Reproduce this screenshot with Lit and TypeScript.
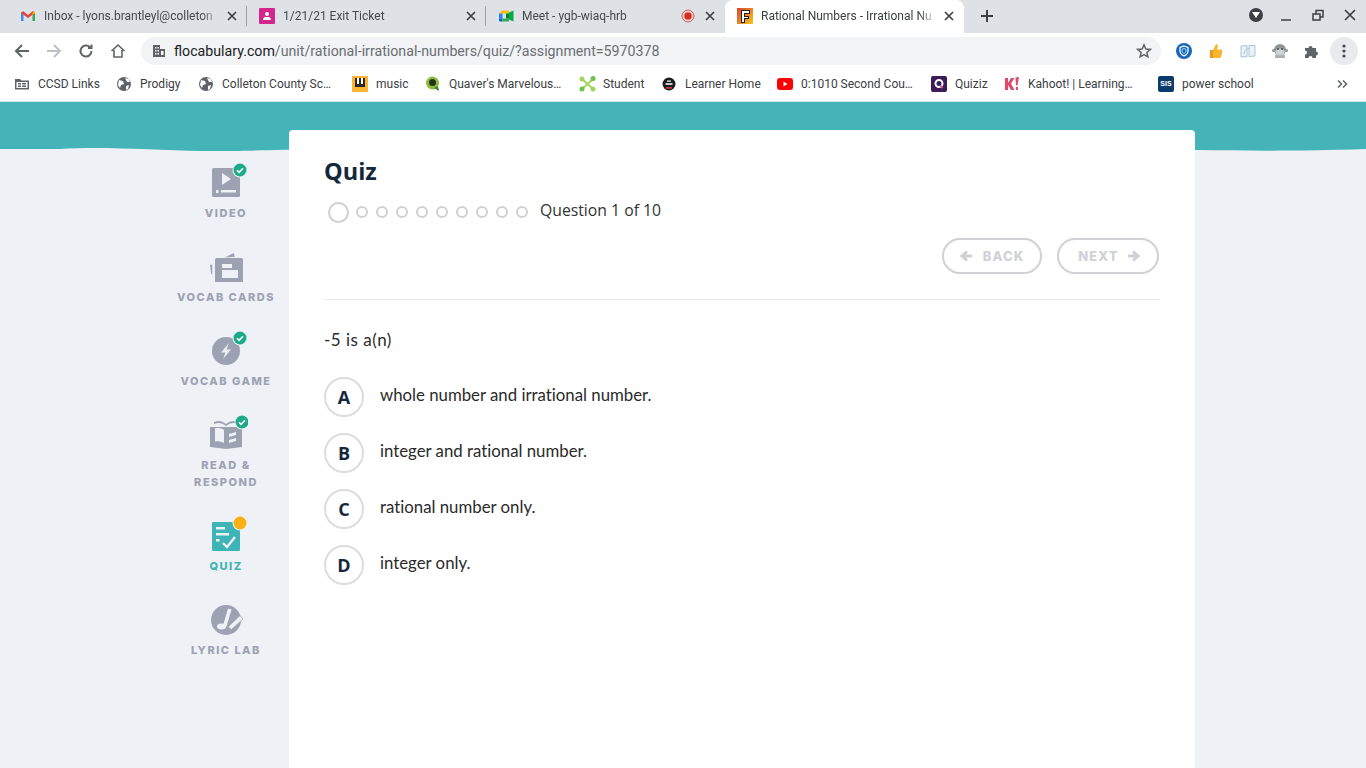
import { LitElement, css, html, svg, type TemplateResult } from "lit";
import { customElement } from "lit/decorators.js";

const GREY = "#9da2b3";
const BG = "#eef1f5";

const check = (cx: number, cy: number) => svg`
  <circle cx=${cx} cy=${cy} r="7.5" fill=${BG}></circle>
  <circle cx=${cx} cy=${cy} r="6.5" fill="#1dab87"></circle>
  <path d="M${cx - 3} ${cy + 0.2}l2.1 2.1 3.9-4" fill="none" stroke="#fff" stroke-width="1.6"></path>`;

// sidebar icons, all in a 44x36 box (x is offset by 204 from the page)
const sideIcons: Record<string, TemplateResult> = {
  video: html`<svg width="44" height="36" viewBox="0 0 44 36">
    <rect x="8" y="6" width="28" height="29" rx="1.5" fill=${GREY}></rect>
    <path d="M18 14l9 6-9 6z" fill=${BG} transform="translate(0 -3)"></path>
    <rect x="12" y="28" width="2.5" height="3" fill=${BG}></rect>
    <rect x="17" y="28" width="15" height="2.5" fill=${BG}></rect>
    ${check(36, 8)}
  </svg>`,
  cards: html`<svg width="44" height="36" viewBox="0 0 44 36">
    <path d="M6 19l1.200 9 1 .5V18.600zM21 11.500l8.500-4.500 1.500 3.800z" fill=${GREY}></path>
    <rect x="11" y="12" width="28" height="26" rx="1.500" fill=${GREY}></rect>
    <rect x="18" y="18" width="10" height="4" fill=${BG}></rect>
    <rect x="18" y="24" width="16" height="8" fill=${BG}></rect>
  </svg>`,
  game: html`<svg width="44" height="36" viewBox="0 0 44 36">
    <circle cx="22" cy="21" r="14" fill=${GREY}></circle>
    <path d="M25 13l-8 9.500h4.500l-2.500 6.500 8-9.500h-4.500z" fill=${BG}></path>
    ${check(36, 8)}
  </svg>`,
  read: html`<svg width="44" height="36" viewBox="0 0 44 36">
    <path d="M10 8c5-2 8-1 12 2 4-3 7-4 12-2v2c-5-2-8-1-12 2-4-3-7-4-12-2z" fill=${GREY}></path>
    <path d="M6 13h32v20l-16 2-16-2z" fill=${GREY}></path>
    <path d="M11 14.500c3-1 6-.5 9 1.500v13c-3-1.500-6-2-9-1.500z" fill=${BG}></path>
    <path d="M25 20l7-2v3l-7 2zM25 26l7-2v3l-7 2z" fill=${BG}></path>
    ${check(38, 8)}
  </svg>`,
  quiz: html`<svg width="44" height="36" viewBox="0 0 44 36">
    <rect x="8" y="7" width="28" height="29" rx="1" fill="#3fb4b6"></rect>
    <path d="M12 12h9v2.500h-9zM12 18h13v2.500h-13zM12 24h3.500v2.500h-3.500z" fill=${BG}></path>
    <path d="M19 28l4 4 8-10" fill="none" stroke=${BG} stroke-width="2.400"></path>
    <circle cx="36" cy="8" r="7.500" fill=${BG}></circle>
    <circle cx="36" cy="8" r="6.500" fill="#fbb016"></circle>
  </svg>`,
  lyric: html`<svg width="44" height="36" viewBox="0 0 44 36">
    <circle cx="22" cy="21" r="15" fill=${GREY}></circle>
    <path d="M24 9.500l3.500 1-5 17-3.500-1z" fill=${BG}></path>
    <ellipse cx="17.500" cy="27.500" rx="4.500" ry="3" fill=${BG}></ellipse>
    <path d="M24 28l12-11.500 3 3.500-11.500 10.500z" fill=${BG} stroke=${GREY} stroke-width=".8"></path>
  </svg>`,
};

const sideItems = [
  { icon: "video", label: "VIDEO" },
  { icon: "cards", label: "VOCAB CARDS" },
  { icon: "game", label: "VOCAB GAME" },
  { icon: "read", label: "READ &\nRESPOND" },
  { icon: "quiz", label: "QUIZ", active: true },
  { icon: "lyric", label: "LYRIC LAB" },
];

const favicons = {
  gmail: html`<svg width="16" height="16" viewBox="0 0 16 16">
    <path d="M1 13V4.500L3.500 4v9z" fill="#4285f4"></path>
    <path d="M15 13V4.500L12.500 4v9z" fill="#34a853"></path>
    <path d="M1 5l2-2 5 4 5-4 2 2-7 5z" fill="#ea4335"></path>
    <path d="M12.500 4.800L15 3.500V5l-2.500 2z" fill="#fbbc04"></path>
  </svg>`,
  ticket: html`<svg width="16" height="16" viewBox="0 0 16 16">
    <rect width="16" height="16" rx="1" fill="#d3258c"></rect>
    <circle cx="8" cy="6" r="2" fill="#fff"></circle>
    <path d="M4 12c0-2.500 1.500-3 4-3s4 .5 4 3z" fill="#fff"></path>
  </svg>`,
  meet: html`<svg width="16" height="16" viewBox="0 0 16 16">
    <path d="M4 2.500h7v3H1z" fill="#fbbc04"></path>
    <path d="M1 5.500h3.500v5H1z" fill="#2684fc"></path>
    <path d="M1 10.500h3.500v3H2.500a1.500 1.500 0 0 1-1.500-1.500z" fill="#0066da"></path>
    <path d="M4.500 10.500H11v3H4.500z" fill="#34a853"></path>
    <path d="M11 4.500v7l4.500 2v-11z" fill="#00ac47"></path>
    <path d="M8 5.500h3v5H8z" fill="#00832d"></path>
  </svg>`,
  floc: html`<svg width="16" height="16" viewBox="0 0 16 16">
    <defs><linearGradient id="fl" x1="0" y1="0" x2="1" y2="1">
      <stop offset="0" stop-color="#d8432b"></stop><stop offset="1" stop-color="#f9c623"></stop>
    </linearGradient></defs>
    <rect width="16" height="16" fill="url(#fl)"></rect>
    <path d="M4 2h9v4H8v2h4v3H8v4H4z" fill="#222"></path>
    <path d="M5 3h7v2H7v4h4v1H7v4H5z" fill="#fff"></path>
  </svg>`,
};

const globe = html`<svg width="16" height="16" viewBox="0 0 16 16">
  <circle cx="8" cy="8" r="7" fill="#5f6368"></circle>
  <path d="M3 4l4 1 1 3-3 1-1 3-2-3zM9 2l4 1 1 3-3 0zM10 10l3-1-1 4-2 1z" fill="#fff"></path>
</svg>`;

const bookmarks: { label: string; width: number; icon: TemplateResult }[] = [
  { label: "CCSD Links", width: 102, icon: html`<svg width="14" height="14" viewBox="0 0 14 14">
    <path d="M0 2h5l1.500 1.500H14V12.500H0z" fill="#5f6368"></path>
    <path d="M1.500 5h11v6h-11z" fill="#fff"></path>
    <path d="M3 6h3v1.500H3zM7 6h4v1.500H7zM3 8.500h3V10H3zM7 8.500h4V10H7z" fill="#5f6368"></path>
  </svg>` },
  { label: "Prodigy", width: 82, icon: globe },
  { label: "Colleton County Sc…", width: 154, icon: globe },
  { label: "music", width: 73, icon: html`<svg width="16" height="16" viewBox="0 0 16 16">
    <rect width="16" height="16" fill="#fbb534"></rect>
    <rect x="3" y="2" width="10" height="9" fill="#2c2522"></rect>
    <rect x="5" y="2" width="2" height="6" fill="#fff"></rect>
    <rect x="9" y="2" width="2" height="6" fill="#fff"></rect>
  </svg>` },
  { label: "Quaver's Marvelous…", width: 154, icon: html`<svg width="16" height="16" viewBox="0 0 16 16">
    <circle cx="7.500" cy="7" r="6.500" fill="#8dbb3a"></circle>
    <circle cx="7.500" cy="6.500" r="3.500" fill="#24321c"></circle>
    <path d="M9 12l5 3-1-5z" fill="#3a7d44"></path>
  </svg>` },
  { label: "Student", width: 82, icon: html`<svg width="17" height="16" viewBox="0 0 17 16">
    <path d="M3 3l11 10M14 3L3 13" stroke="#a4d65e" stroke-width="2"></path>
    <circle cx="3" cy="3" r="2.500" fill="#a4d65e"></circle>
    <circle cx="14" cy="2.500" r="2.500" fill="#6cc24a"></circle>
    <circle cx="3" cy="13" r="2.500" fill="#6cc24a"></circle>
    <circle cx="14" cy="13" r="2.500" fill="#a4d65e"></circle>
  </svg>` },
  { label: "Learner Home", width: 116, icon: html`<svg width="14" height="14" viewBox="0 0 14 14">
    <circle cx="7" cy="7" r="6.500" fill="#1c1c1c"></circle>
    <path d="M3.500 7h7" stroke="#fff" stroke-width="1.500"></path>
    <path d="M4 10h6v1.800H4z" fill="#c9354a"></path>
    <path d="M5 3.500h4v1.200H5z" fill="#fff"></path>
  </svg>` },
  { label: "0:1010 Second Cou…", width: 154, icon: html`<svg width="16" height="12" viewBox="0 0 16 12">
    <rect width="16" height="12" rx="3" fill="#f00"></rect>
    <path d="M6.500 3.500l4 2.500-4 2.500z" fill="#fff"></path>
  </svg>` },
  { label: "Quiziz", width: 73, icon: html`<svg width="16" height="16" viewBox="0 0 16 16">
    <rect width="16" height="16" rx="2" fill="#3a1d57"></rect>
    <circle cx="8" cy="7.500" r="3.500" fill="none" stroke="#fff" stroke-width="2"></circle>
    <path d="M9.500 10l2 2" stroke="#e64b8d" stroke-width="2"></path>
  </svg>` },
  { label: "Kahoot! | Learning…", width: 154, icon: html`<svg width="16" height="16" viewBox="0 0 16 16">
    <path d="M1 2h3v5l3-5h3.500L7 7.500l3.500 6.500H7L4 9v5H1z" fill="#e2486a"></path>
    <path d="M11.500 1.500l3.500-.5-1.500 8.500h-1.500zM12 11h2v3h-2z" fill="#e2486a"></path>
  </svg>` },
  { label: "power school", width: 100, icon: html`<span class="sis">SIS</span>` },
];

const stroke = (d: string, color = "#45484d", w = 2) =>
  html`<svg width="16" height="16" viewBox="0 0 16 16"><path d=${d} fill="none" stroke=${color} stroke-width=${w}></path></svg>`;

@customElement("app-root")
export class AppRoot extends LitElement {
  static override styles = css`
    :host {
      display: block;
      width: 1366px;
      height: 768px;
      overflow: hidden;
      background: #eef1f5;
      font-family: "Lato", "Liberation Sans", sans-serif;
    }
    svg { display: block; flex: none; }

    /* browser chrome */
    .tabstrip {
      height: 33px;
      background: #dee1e6;
      display: flex;
      padding-left: 8px;
      font: 12px Roboto, sans-serif;
      color: #45484d;
    }
    .tab {
      width: 239px;
      height: 33px;
      box-sizing: border-box;
      display: flex;
      align-items: center;
      padding: 0 7px 2px 12px;
      position: relative;
    }
    .tab + .tab::before {
      content: "";
      position: absolute;
      left: -1px;
      top: 6px;
      height: 20px;
      width: 1px;
      background: #9aa0a6;
    }
    .tab.active::before { display: none; }
    .tab.active {
      background: #fff;
      border-radius: 8px 8px 0 0;
      color: #3c4043;
    }
    .title {
      flex: 1;
      margin-left: 8px;
      white-space: nowrap;
      overflow: hidden;
      font-size: 12px;
      -webkit-mask-image: linear-gradient(90deg, #000 calc(100% - 18px), transparent);
      mask-image: linear-gradient(90deg, #000 calc(100% - 18px), transparent);
    }
    .rec { margin-right: 3px; }
    .x { margin-left: 4px; }
    .plus { margin: 8px 0 0 15px; }
    .winctl {
      margin-left: auto;
      display: flex;
      align-items: center;
      gap: 16px;
      padding: 0 8px 4px 0;
    }
    .dropdown {
      width: 14px;
      height: 14px;
      border-radius: 50%;
      background: #3c4043;
      display: flex;
      align-items: center;
      justify-content: center;
      margin-right: -1px;
    }
    .toolbar {
      height: 34px;
      box-sizing: border-box;
      padding: 2px 7px 0 14px;
      background: #fff;
      display: flex;
      align-items: center;
    }
    .nav { display: flex; gap: 16px; margin-right: 15px; }
    .omni {
      width: 1020px;
      height: 28px;
      border-radius: 14px;
      background: #f1f3f4;
      display: flex;
      align-items: center;
      padding: 0 9px 0 11px;
      box-sizing: border-box;
      font: 14.2px Roboto, sans-serif;
      color: #6a6e73;
    }
    .omni b { font-weight: 400; color: #202124; }
    .omni .url { margin-left: 8px; flex: 1; }
    .exts {
      display: flex;
      align-items: center;
      gap: 16px;
      margin-left: 15px;
    }
    .menu {
      width: 28px;
      height: 28px;
      border-radius: 50%;
      background: #e8eaed;
      display: flex;
      align-items: center;
      justify-content: center;
      margin-left: -6px;
    }
    .bookmarks {
      height: 35px;
      background: #fff;
      display: flex;
      align-items: center;
      padding: 0 0 1px 14px;
      font: 12px Roboto, sans-serif;
      color: #3c4043;
      box-sizing: border-box;
      border-bottom: 1px solid #d5e6e8;
    }
    .bm {
      display: flex;
      align-items: center;
      gap: 8px;
      white-space: nowrap;
      flex: none;
    }
    .bm .ic { width: 16px; display: flex; justify-content: center; flex: none; }
    .sis {
      width: 16px;
      height: 16px;
      border-radius: 2px;
      background: #0d3b6e;
      color: #fff;
      font: 700 7px "Liberation Sans", sans-serif;
      display: flex;
      align-items: center;
      justify-content: center;
    }
    .more { margin-left: auto; padding-right: 15px; }

    /* flocabulary page */
    .band { display: block; }
    .main {
      display: flex;
      margin-top: -21px;
      padding-left: 163px;
    }
    .side {
      width: 126px;
      flex: none;
      box-sizing: border-box;
      padding-top: 32px;
      display: flex;
      flex-direction: column;
      align-items: center;
      gap: 24px;
    }
    .item {
      display: flex;
      flex-direction: column;
      align-items: center;
      gap: 7px;
      font: 800 11px/17px Inter, sans-serif;
      letter-spacing: 1.5px;
      color: #9da2b3;
      text-align: center;
      white-space: pre-line;
    }
    .item.active { color: #3fb4b6; }
    .card {
      width: 906px;
      height: 638px;
      box-sizing: border-box;
      background: #fff;
      border-radius: 4px 4px 0 0;
      padding: 23px 35px 0;
    }
    h1 {
      margin: 0;
      font: 700 23.5px/36px "Open Sans", sans-serif;
      color: #14283c;
    }
    .progress {
      display: flex;
      align-items: center;
      margin-top: 7px;
      height: 28px;
      padding-left: 4px;
    }
    .dot {
      width: 12px;
      height: 12px;
      box-sizing: border-box;
      border: 2px solid #d0d0d0;
      border-radius: 50%;
      margin: 4px 0 0 8px;
    }
    .dot.first { width: 21px; height: 21px; margin: 4px -1px 0 0; }
    .count {
      margin-left: 12px;
      font: 400 15.75px "Open Sans", sans-serif;
      color: #333;
    }
    .buttons {
      display: flex;
      justify-content: flex-end;
      gap: 15px;
      margin-top: 14px;
      padding-bottom: 25px;
      border-bottom: 1px solid #eaeaea;
    }
    .btn {
      height: 36px;
      box-sizing: border-box;
      border: 2px solid #d0d1d7;
      border-radius: 18px;
      display: flex;
      align-items: center;
      justify-content: center;
      gap: 10px;
      padding-bottom: 1px;
      font: 800 13px Inter, sans-serif;
      letter-spacing: 1.1px;
      color: #d0d1d7;
    }
    .btn.back { width: 100px; }
    .btn.next { width: 102px; margin-right: 1px; gap: 8px; padding-left: 2px; }
    .question {
      margin-top: 27px;
      font-size: 17px;
      letter-spacing: .5px;
      font-variant-ligatures: none;
      line-height: 26px;
      color: #2a2a2a;
    }
    .options {
      margin-top: 24px;
      display: flex;
      flex-direction: column;
      gap: 16px;
    }
    .option {
      display: flex;
      align-items: center;
      gap: 16px;
      font-size: 16.8px;
      font-variant-ligatures: none;
      color: #2a2a2a;
    }
    .letter {
      width: 40px;
      height: 40px;
      box-sizing: border-box;
      border: 2px solid #dcdcdc;
      border-radius: 50%;
      display: flex;
      align-items: center;
      justify-content: center;
      font: 700 18px "Open Sans", sans-serif;
      color: #14283c;
      flex: none;
    }
    .option span { position: relative; top: -3px; }
  `;

  private tab(icon: TemplateResult, title: string, cls = "", extra?: TemplateResult) {
    return html`<div class="tab ${cls}">
      ${icon}
      <div class="title">${title}</div>
      ${extra}
      <div class="x">${stroke("M4 4l8 8M12 4l-8 8", "#3c4043", 1.7)}</div>
    </div>`;
  }

  override render() {
    const rec = html`<svg class="rec" width="14" height="14" viewBox="0 0 14 14">
      <circle cx="7" cy="7" r="6" fill="#f8d7d5" stroke="#e2574c" stroke-width="1"></circle>
      <circle cx="7" cy="7" r="3.800" fill="#d93025"></circle>
    </svg>`;
    return html`
      <div class="tabstrip">
        ${this.tab(favicons.gmail, "Inbox - lyons.brantleyl@colleton")}
        ${this.tab(favicons.ticket, "1/21/21 Exit Ticket")}
        ${this.tab(favicons.meet, "Meet - ygb-wiaq-hrb", "", rec)}
        ${this.tab(favicons.floc, "Rational Numbers - Irrational Nu", "active")}
        <div class="plus">${stroke("M8 2v12M2 8h12", "#3c4043", 2)}</div>
        <div class="winctl">
          <div class="dropdown">
            <svg width="8" height="6" viewBox="0 0 8 6"><path d="M0 0h8L4 6z" fill="#fff"></path></svg>
          </div>
          ${stroke("M3 13h10", "#3c4043", 1.500)}
          ${stroke("M3 7h7v6H3zM6 7V3.500h7V10h-3", "#3c4043", 1.500)}
          ${stroke("M3 3l10 10M13 3L3 13", "#3c4043", 1.700)}
        </div>
      </div>

      <div class="toolbar">
        <div class="nav">
          ${stroke("M15 8H2M8 2L2 8l6 6", "#5f6368")}
          ${stroke("M1 8h13M8 2l6 6-6 6", "#bdc1c6")}
          ${stroke("M13.500 8a5.500 5.500 0 1 1-1.600-3.900M13.500 1.500V5H10", "#5f6368")}
          ${stroke("M1.500 8L8 2l6.500 6M4 7v7h8V7", "#5f6368", 1.600)}
        </div>
        <div class="omni">
          <svg width="14" height="14" viewBox="0 0 14 14">
            <path d="M1 1h7v4h5v8H1z" fill="#5f6368"></path>
            <path d="M3 3h1.500v1.500H3zM5.500 3H7v1.500H5.500zM3 6h1.500v1.500H3zM5.500 6H7v1.500H5.500zM3 9h1.500v1.500H3zM5.500 9H7v1.500H5.500zM9 7h2.500v4H9z" fill="#fff"></path>
          </svg>
          <div class="url"><b>flocabulary.com</b>/unit/rational-irrational-numbers/quiz/?assignment=5970378</div>
          <svg width="16" height="16" viewBox="0 0 16 16">
            <path d="M8 1.800l1.800 4.200 4.500.4-3.400 3 1 4.400L8 11.500l-3.900 2.300 1-4.400-3.400-3 4.500-.4z" fill="none" stroke="#5f6368" stroke-width="1.500"></path>
          </svg>
        </div>
        <div class="exts">
          <svg width="16" height="16" viewBox="0 0 16 16">
            <circle cx="8" cy="8" r="8" fill="#1668b8"></circle>
            <path d="M8 3l4 1.500V8c0 2.500-2 4-4 5-2-1-4-2.500-4-5V4.500z" fill="none" stroke="#fff" stroke-width="1.200"></path>
            <path d="M8 5.500l2 .8V8c0 1.200-1 2-2 2.500-1-.5-2-1.300-2-2.500V6.300z" fill="none" stroke="#9dd0f5"></path>
          </svg>
          <svg width="16" height="16" viewBox="0 0 16 16">
            <path d="M2 7h3v8H2z" fill="#e99a1c"></path>
            <path d="M5 7l3-6c1.500 0 2 1 1.700 2.500L9 6.500h5v4l-1.500 4.500H5z" fill="#f7b733"></path>
          </svg>
          <svg width="16" height="16" viewBox="0 0 16 16">
            <path d="M1 3l6 -.5v11l-6 .5zM9 2.500h6V13l-6 .5z" fill="#eaf2f8" stroke="#a9c4d8"></path>
            <path d="M4 11c0-3 2-5 6-6" fill="none" stroke="#a9c4d8"></path>
          </svg>
          <svg width="16" height="16" viewBox="0 0 16 16">
            <circle cx="8" cy="7" r="6" fill="#8f9498"></circle>
            <circle cx="1.500" cy="7.500" r="1.500" fill="#8f9498"></circle>
            <circle cx="14.500" cy="7.500" r="1.500" fill="#8f9498"></circle>
            <ellipse cx="8" cy="9" rx="4.500" ry="3.500" fill="#d0d3d6"></ellipse>
            <circle cx="6" cy="6" r="1" fill="#444"></circle>
            <circle cx="10" cy="6" r="1" fill="#444"></circle>
            <path d="M3 12h10v3H3z" fill="#b0b3b6"></path>
          </svg>
          <svg width="16" height="16" viewBox="0 0 16 16">
            <path d="M1 5h3.500a2 2 0 0 1 4 0H12v3.500a2 2 0 0 1 0 4V15H8.500a2 2 0 0 0-4 0H1v-3.500a2 2 0 0 0 0-4z" fill="#5f6368"></path>
          </svg>
          <div class="menu">
            <svg width="4" height="14" viewBox="0 0 4 14">
              <circle cx="2" cy="2" r="1.600" fill="#45484d"></circle>
              <circle cx="2" cy="7" r="1.600" fill="#45484d"></circle>
              <circle cx="2" cy="12" r="1.600" fill="#45484d"></circle>
            </svg>
          </div>
        </div>
      </div>

      <div class="bookmarks">
        ${bookmarks.map(
          (b) => html`<div class="bm" style="width:${b.width}px">
            <div class="ic">${b.icon}</div>${b.label}
          </div>`,
        )}
        <div class="more">
          ${stroke("M3 4.500l3.500 3.500L3 11.500M8 4.500l3.500 3.500L8 11.500", "#5f6368", 1.500)}
        </div>
      </div>

      <svg class="band" width="1366" height="49" viewBox="0 0 1366 49">
        <path d="M0 0h1366v47c-60 2-110 2-170 1s-120-2-220 0-200-2-300 0-190 2-300 0c-100-2-130 2-175 1S100 44 60 47L0 47z" fill="#45b4b8"></path>
      </svg>

      <div class="main">
        <nav class="side">
          ${sideItems.map(
            (s) => html`<div class="item ${s.active ? "active" : ""}">
              ${sideIcons[s.icon]}
              <div>${s.label}</div>
            </div>`,
          )}
        </nav>
        <section class="card">
          <h1>Quiz</h1>
          <div class="progress">
            <div class="dot first"></div>
            ${Array.from({ length: 9 }, () => html`<div class="dot"></div>`)}
            <div class="count">Question 1 of 10</div>
          </div>
          <div class="buttons">
            <div class="btn back">
              <svg width="13" height="12" viewBox="0 0 13 12"><path d="M12 6H4M7 1.500L2 6l5 4.500" fill="none" stroke="#d0d1d7" stroke-width="3"></path></svg>
              BACK
            </div>
            <div class="btn next">
              NEXT
              <svg width="13" height="12" viewBox="0 0 13 12"><path d="M1 6h8M6 1.500L11 6l-5 4.500" fill="none" stroke="#d0d1d7" stroke-width="3"></path></svg>
            </div>
          </div>
          <div class="question">-5 is a(n)</div>
          <div class="options">
            ${[
              ["A", "whole number and irrational number."],
              ["B", "integer and rational number."],
              ["C", "rational number only."],
              ["D", "integer only."],
            ].map(
              ([l, t]) => html`<div class="option">
                <div class="letter">${l}</div>
                <span>${t}</span>
              </div>`,
            )}
          </div>
        </section>
      </div>
    `;
  }
}
